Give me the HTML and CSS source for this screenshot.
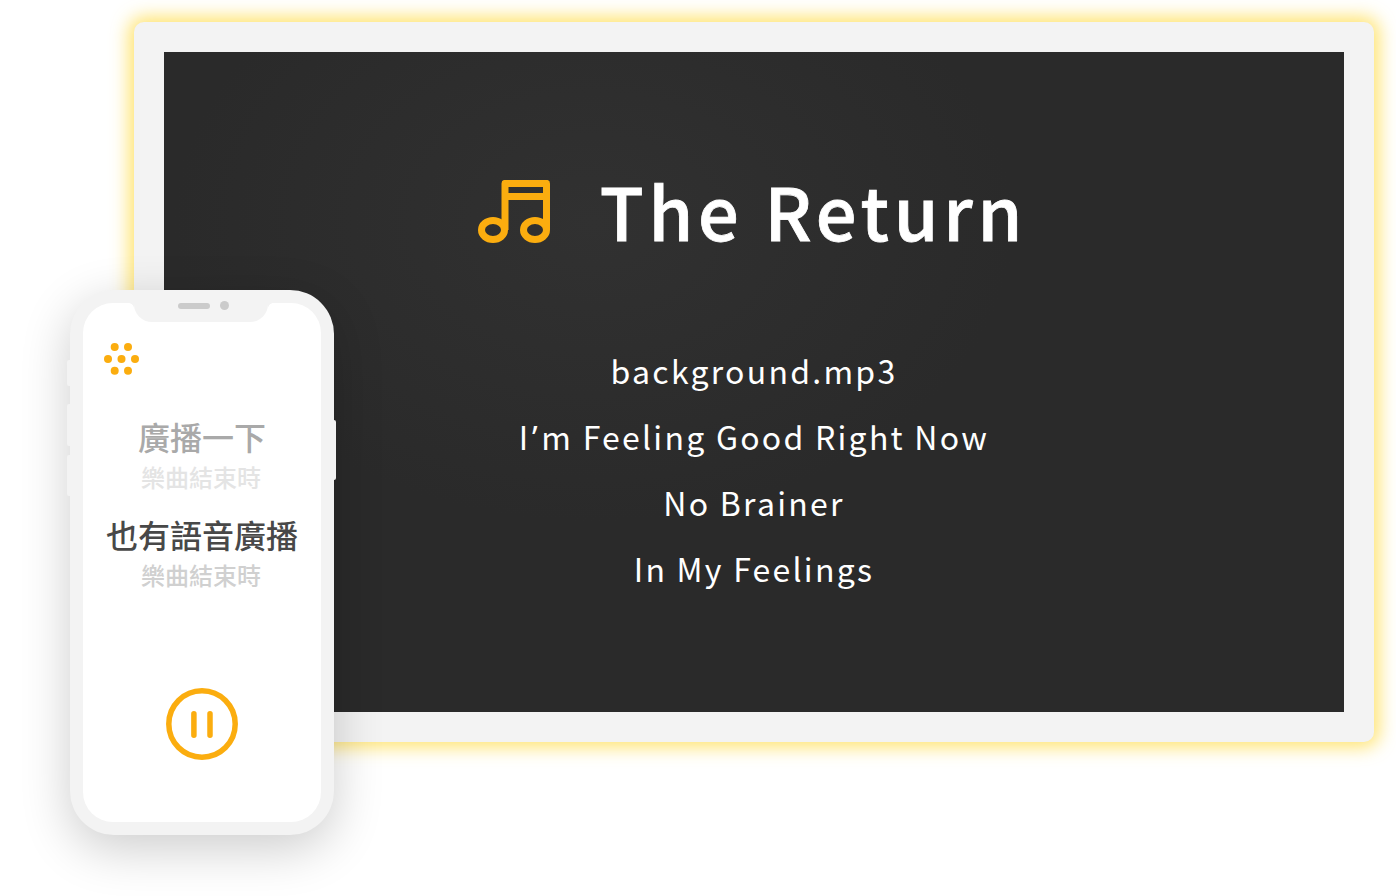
FILE: index.html
```html
<!DOCTYPE html>
<html lang="zh-Hant">
<head>
<meta charset="utf-8">
<title>The Return</title>
<link rel="stylesheet" href="styles.css">
</head>
<body>
<main class="stage">
  <section class="monitor">
    <div class="screen">
      <div class="title-row">
        <svg class="note" viewBox="0 0 72 64" aria-hidden="true">
          <path d="M27 50V3.400H68.500V50M27 16.500H68.500" fill="none" stroke="#fbad0f" stroke-width="7" stroke-linejoin="round"/>
          <ellipse cx="15" cy="50" rx="11.500" ry="9.500" fill="none" stroke="#fbad0f" stroke-width="7"/>
          <ellipse cx="57" cy="50" rx="11.500" ry="9.500" fill="none" stroke="#fbad0f" stroke-width="7"/>
        </svg>
        <h1 class="title">The Return</h1>
      </div>
      <ul class="tracks">
        <li>background.mp3</li>
        <li>I<span class="apos">’</span>m Feeling Good Right Now</li>
        <li>No Brainer</li>
        <li>In My Feelings</li>
      </ul>
    </div>
  </section>

  <aside class="phone">
    <span class="side side-a"></span>
    <span class="side side-b"></span>
    <span class="side side-c"></span>
    <span class="side side-d"></span>
    <div class="display">
      <div class="notch"><span class="speaker"></span><span class="camera"></span></div>
      <svg class="dots" viewBox="0 0 36 32" aria-hidden="true">
        <g fill="#fbad0f">
          <circle cx="10.700" cy="4" r="4"/><circle cx="24" cy="4" r="4"/>
          <circle cx="4" cy="16" r="4"/><circle cx="17.500" cy="16" r="4"/><circle cx="31" cy="16" r="4"/>
          <circle cx="10.700" cy="27.800" r="4"/><circle cx="24" cy="27.800" r="4"/>
        </g>
      </svg>
      <div class="msg">
        <p class="msg-main faded">廣播一下</p>
        <p class="msg-sub pale">樂曲結束時</p>
      </div>
      <div class="msg">
        <p class="msg-main">也有語音廣播</p>
        <p class="msg-sub">樂曲結束時</p>
      </div>
      <svg class="pause" viewBox="0 0 72 72" aria-hidden="true">
        <circle cx="36" cy="36" r="33.200" fill="none" stroke="#fbad0f" stroke-width="5.500"/>
        <path d="M27.900 25.800V47.300M44 25.800V47.300" fill="none" stroke="#fbad0f" stroke-width="5.500" stroke-linecap="round"/>
      </svg>
    </div>
  </aside>
</main>
</body>
</html>
```
FILE: styles.css
```css
* { box-sizing: border-box; }
html, body { margin: 0; padding: 0; background: #fff; }
body { width: 1396px; height: 896px; overflow: hidden; font-family: "Noto Sans CJK TC", "Noto Sans", sans-serif; }
.stage { position: relative; width: 1396px; height: 896px; padding: 22px 22px 0 134px; }

.monitor {
  width: 1240px; height: 720px; padding: 30px;
  background: #f3f3f3; border-radius: 10px;
  box-shadow: 0 0 18px 5px rgba(255, 217, 60, .75);
}
.screen {
  height: 660px; background: radial-gradient(ellipse 420px 300px at 430px 170px, #313131, #2a2a2a);
  display: flex; flex-direction: column; align-items: center;
  padding-top: 115px;
}
.title-row { display: flex; align-items: center; height: 88px; margin-left: -4px; }
.note { width: 72px; height: 64px; margin: 2px 50px 0 1px; flex: none; }
.title {
  margin: -2px 0 0; color: #fff; font-size: 72px; font-weight: 500;
  letter-spacing: 4.800px; line-height: 88px;
  -webkit-text-stroke: .8px #fff;
}
.tracks { list-style: none; margin: 82px 0 0; padding: 0; text-align: center; color: #fff; }
.tracks li { font-size: 32px; line-height: 66px; letter-spacing: 2.250px; font-weight: 400; }
.apos { font-family: "Noto Sans", sans-serif; line-height: 0; margin: 0 1.500px; }

.phone {
  position: absolute; left: 70px; top: 290px; width: 264px; height: 545px;
  background: #f3f3f3; border-radius: 44px; padding: 13px;
  box-shadow: 0 14px 50px rgba(0, 0, 0, .2);
}
.side { position: absolute; background: #f3f3f3; width: 3px; border-radius: 2px 0 0 2px; }
.side-a { left: -3px; top: 70px; height: 26px; }
.side-b { left: -3px; top: 114px; height: 42px; }
.side-c { left: -3px; top: 165px; height: 41px; }
.side-d { left: 264px; top: 130px; height: 60px; width: 2px; border-radius: 0 2px 2px 0; }
.display {
  width: 238px; height: 519px; background: #fff; border-radius: 30px;
  display: flex; flex-direction: column; align-items: center;
  position: relative;
  padding-top: 110px;
}
.notch {
  position: absolute; left: 51px; top: 0; width: 134px; height: 19px;
  background: #f3f3f3; border-radius: 0 0 18px 18px;
  display: flex; justify-content: center; align-items: flex-start; gap: 10px; padding-left: 5px;
}
.notch::before, .notch::after { content: ""; position: absolute; top: 0; width: 5px; height: 5px; }
.notch::before { left: -5px; background: radial-gradient(circle at 0 100%, transparent 4.500px, #f3f3f3 5px); }
.notch::after { right: -5px; background: radial-gradient(circle at 100% 100%, transparent 4.500px, #f3f3f3 5px); }
.speaker { width: 32px; height: 6px; background: #cbcbcb; border-radius: 3px; }
.camera { width: 9px; height: 9px; margin-top: -2px; background: #cbcbcb; border-radius: 50%; }
.dots { position: absolute; left: 21px; top: 40px; width: 36px; height: 32px; }
.msg { width: 100%; text-align: center; margin-bottom: 19px; }
.msg p { margin: 0; }
.msg-main { font-size: 32px; line-height: 46px; color: #484848; font-weight: 500; }
.msg-main.faded { color: #a9a9a9; }
.msg .msg-sub { font-size: 24px; line-height: 30px; margin-top: 3px; padding-right: 2px; color: #d0d0d0; font-weight: 500; }
.msg .msg-sub.pale { color: #e4e4e4; }
.pause { position: absolute; left: 83px; top: 385px; width: 72px; height: 72px; }
```
